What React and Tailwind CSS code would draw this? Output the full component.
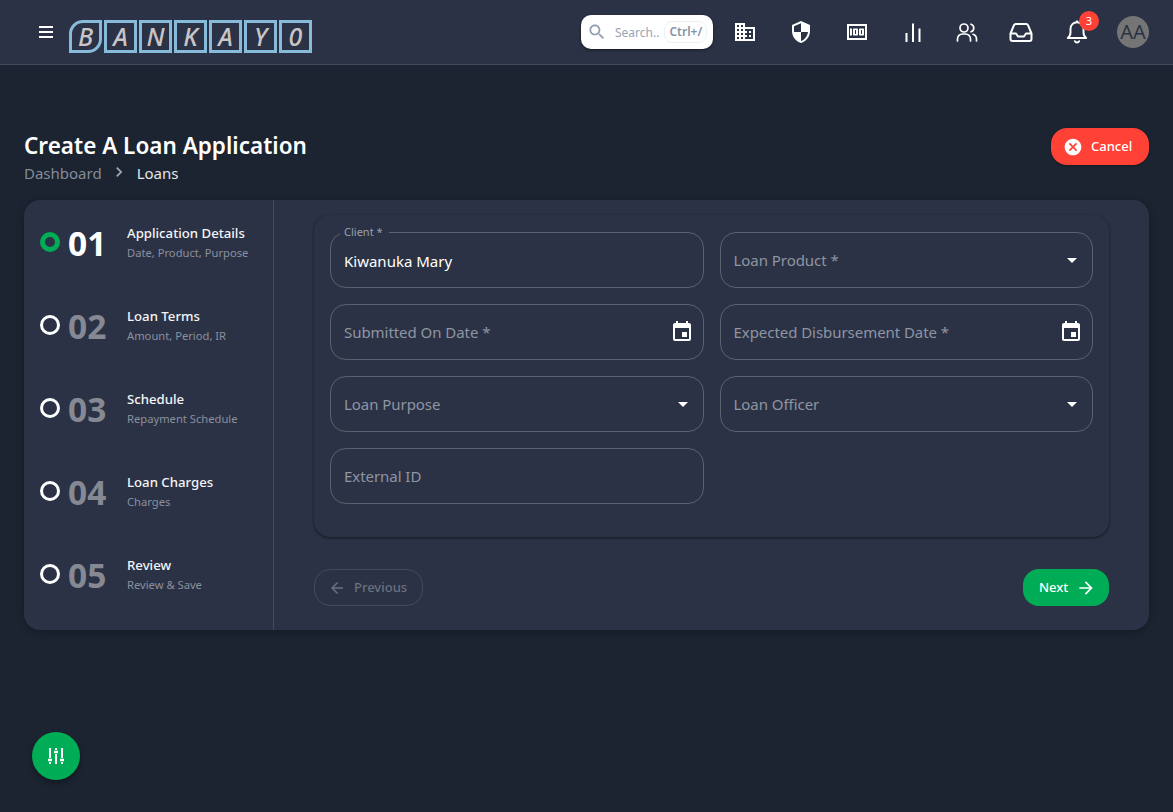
import React from "react";

const Ico = ({ d, size = 24, className = "", fill = "currentColor" }) => (
  <svg width={size} height={size} viewBox="0 0 24 24" fill={fill} className={className}>
    <path d={d} />
  </svg>
);

const CAL = "M17 12h-5v5h5v-5zM16 1v2H8V1H6v2H5c-1.11 0-1.99.9-1.99 2L3 19c0 1.1.89 2 2 2h14c1.1 0 2-.9 2-2V5c0-1.1-.9-2-2-2h-1V1h-2zm3 18H5V8h14v11z";

const Stroke = ({ children, size = 24, w = 2, cap = "round" }) => (
  <svg width={size} height={size} viewBox="0 0 24 24" fill="none" stroke="currentColor" strokeWidth={w} strokeLinecap={cap} strokeLinejoin="round">
    {children}
  </svg>
);

const Logo = () => (
  <div className="flex gap-[2px] ml-[16px] mt-[8px]">
    {"BANKAY0".split("").map((c, i) => (
      <div
        key={i}
        className={`w-[33px] h-[33px] border-[3px] border-[#86bcd9] flex items-center justify-center text-[#c9c5c6] italic text-[25px] font-medium font-['Noto_Sans',sans-serif] leading-none ${i === 0 ? "rounded-tl-[14px] rounded-br-[14px]" : ""}`}
      >
        {c}
      </div>
    ))}
  </div>
);

const HeaderIcon = ({ children }) => (
  <div className="w-[56px] flex items-center justify-center text-white">{children}</div>
);

const Step = ({ n, title, sub, active }) => (
  <div className="h-[83px] flex items-start pt-[23px] pl-[16px]">
    <div
      className={`w-[20px] h-[20px] rounded-full mt-[9px] shrink-0 ${active ? "border-[5px] border-[#00ad56]" : "border-[3px] border-white"}`}
    />
    <div className={`w-[59px] ml-[8px] mt-[1px] text-[33.5px] leading-[38px] font-bold font-['Open_Sans',sans-serif] ${active ? "text-white" : "text-[#868993]"}`}>
      {n}
    </div>
    <div>
      <div className="text-[13.2px] leading-[20px] font-medium text-[#f4f5f7]">{title}</div>
      <div className="text-[11.2px] leading-[20px] text-[#8a909e]">{sub}</div>
    </div>
  </div>
);

const Field = ({ label, value, icon, select }) => (
  <div className="relative h-[56px]">
    <fieldset className={`absolute inset-x-0 bottom-0 ${value ? "-top-[5px]" : "top-0"} rounded-[16px] border border-[#5b616f] px-[8px] pointer-events-none`}>
      {value && (
        <legend className="ml-[1px] h-[11px] px-[5px] text-[11px] leading-[11px] text-transparent">{label}</legend>
      )}
    </fieldset>
    {value ? (
      <>
        <span className="absolute left-[14px] -top-[6px] text-[11px] leading-[11px] text-[#9ba1ad]">{label}</span>
        <span className="absolute left-[14px] top-[19px] text-[15px] leading-[20px] text-white">{value}</span>
      </>
    ) : (
      <span className="absolute left-[14px] top-[18px] text-[15px] leading-[20px] text-[#8f95a2] tracking-[-0.05px]">{label}</span>
    )}
    {icon && (
      <span className="absolute right-[10px] top-[16px] text-white">
        <Ico d={CAL} />
      </span>
    )}
    {select && (
      <span className="absolute right-[9px] top-[16px] text-white">
        <Ico d="M7 10l5 5 5-5z" />
      </span>
    )}
  </div>
);

export default function App() {
  return (
    <div className="relative min-h-[812px] bg-[#1c2431] font-['Noto_Sans',sans-serif] overflow-hidden">
      <header className="h-[65px] bg-[#2b3245] border-b border-[#434a5b] flex items-center pl-[39px] pr-[24px]">
        <div className="w-[14px] flex flex-col gap-[3px] -mt-[1px]">
          <span className="block h-[2px] bg-white" />
          <span className="block h-[2px] bg-white" />
          <span className="block h-[2px] bg-white" />
        </div>
        <Logo />
        <div className="ml-auto flex items-center">
          <div className="w-[132px] h-[34px] rounded-[10px] bg-white shadow-[0_1px_3px_rgba(0,0,0,0.5)] flex items-center pl-[6px] -mt-[1px]">
            <span className="text-[#8e9cae]"><Ico d="M15.5 14h-.79l-.28-.27C15.41 12.59 16 11.11 16 9.5 16 5.91 13.09 3 9.5 3S3 5.91 3 9.5 5.91 16 9.5 16c1.61 0 3.09-.59 4.23-1.57l.27.28v.79l5 4.99L20.49 19l-4.99-5zm-6 0C7.01 14 5 11.99 5 9.5S7.01 5 9.5 5 14 7.01 14 9.5 11.99 14 9.5 14z" size={20} /></span>
            <span className="ml-[8px] text-[12px] leading-[20px] mt-[2px] text-[#97a3b4]">Search..</span>
            <span className="ml-[5px] h-[22px] px-[4px] rounded-[8px] border border-[#eef1f4] flex items-center text-[12px] font-semibold text-[#8494a8]">Ctrl+/</span>
          </div>
          <div className="flex items-center ml-[4px]">
            <HeaderIcon><Ico d="M12 7V3H2v18h20V7H12zM6 19H4v-2h2v2zm0-4H4v-2h2v2zm0-4H4V9h2v2zm0-4H4V5h2v2zm4 12H8v-2h2v2zm0-4H8v-2h2v2zm0-4H8V9h2v2zm0-4H8V5h2v2zm10 12h-8v-2h2v-2h-2v-2h2v-2h-2V9h8v10zm-2-8h-2v2h2v-2zm0 4h-2v2h2v-2z" /></HeaderIcon>
            <HeaderIcon><Ico d="M12 1 3 5v6c0 5.55 3.84 10.74 9 12 5.16-1.26 9-6.45 9-12V5l-9-4zm0 10.99h7c-.53 4.12-3.28 7.79-7 8.94V12H5V6.3l7-3.11v8.8z" /></HeaderIcon>
            <HeaderIcon><Ico d="M5 8.5h2v7H5zM12 8.5H9c-.55 0-1 .45-1 1v5c0 .55.45 1 1 1h3c.55 0 1-.45 1-1v-5c0-.55-.45-1-1-1zm-1 5.5h-1v-4h1v4zM18 8.5h-3c-.55 0-1 .45-1 1v5c0 .55.45 1 1 1h3c.55 0 1-.45 1-1v-5c0-.55-.45-1-1-1zm-1 5.5h-1v-4h1v4zM2 4v16h20V4H2zm2 14V6h16v12H4z" /></HeaderIcon>
            <HeaderIcon>
              <Stroke w={2} cap="butt"><path d="M5.5 13v9M12 3.5V22M18.5 8.5V22" /></Stroke>
            </HeaderIcon>
            <div className="w-[52px] flex items-center justify-center text-white">
              <Stroke w={1.7}>
                <circle cx="9" cy="8" r="4" />
                <path d="M2.5 21v-2a5 5 0 0 1 5-5h3a5 5 0 0 1 5 5v2M16 4.2a4 4 0 0 1 0 7.6M21.5 21v-2a5 5 0 0 0-3.5-4.7" />
              </Stroke>
            </div>
            <HeaderIcon>
              <Stroke w={2}>
                <path d="M1.5 13.5 5 5.2A2 2 0 0 1 6.8 4h10.4a2 2 0 0 1 1.8 1.2l3.5 8.3V19a2 2 0 0 1-2 2h-17a2 2 0 0 1-2-2zM1.5 13.5H7l2 3h6l2-3h5.5" />
              </Stroke>
            </HeaderIcon>
            <div className="relative w-[56px] flex items-center justify-center text-white">
              <Stroke w={1.8} size={26}>
                <path d="M3.5 17.5c1.5-1 2.5-2.5 2.5-5V9a6 6 0 0 1 12 0v3.5c0 2.5 1 4 2.5 5zM12 3V2M10 20.5a2.2 2.2 0 0 0 4 0" />
              </Stroke>
              <span className="absolute left-[30px] -top-[8px] w-[20px] h-[20px] rounded-full bg-[#ff4136] text-white text-[11px] flex items-center justify-center">3</span>
            </div>
            <div className="ml-[12px] w-[32px] h-[32px] rounded-full bg-[#757575] text-[#2b3245] text-[20px] flex items-center justify-center">AA</div>
          </div>
        </div>
      </header>

      <main className="px-[24px] pt-[63px]">
        <div className="flex items-start justify-between h-[72px]">
          <div>
            <h1 className="text-[22.5px] leading-[36px] font-semibold text-white">Create A Loan Application</h1>
            <div className="flex items-center text-[15px] leading-[20px] -mt-[1px]">
              <span className="text-[#858b98]">Dashboard</span>
              <span className="mx-[7px] -mt-[2px] text-[#a5a9b2]"><Ico d="M10 6 8.59 7.41 13.17 12l-4.58 4.59L10 18l6-6z" size={20} /></span>
              <span className="text-[#e4e6ea] ml-[1px]">Loans</span>
            </div>
          </div>
          <button className="w-[98px] h-[37px] rounded-[16px] bg-[#ff4136] text-white text-[13px] font-medium flex items-center pl-[12px] shadow-[0_1px_3px_rgba(0,0,0,0.3)]">
            <Ico size={20} d="M12 2C6.47 2 2 6.47 2 12s4.47 10 10 10 10-4.47 10-10S17.53 2 12 2zm5 13.59L15.59 17 12 13.41 8.41 17 7 15.59 10.59 12 7 8.41 8.41 7 12 10.59 15.59 7 17 8.41 13.41 12 17 15.59z" />
            <span className="ml-[8px]">Cancel</span>
          </button>
        </div>

        <div className="h-[430px] rounded-[16px] bg-[#2b3245] flex shadow-[0_2px_8px_rgba(0,0,0,0.25)]">
          <aside className="w-[250px] border-r border-[#434a5b] shrink-0">
            <Step n="01" title="Application Details" sub="Date, Product, Purpose" active />
            <Step n="02" title="Loan Terms" sub="Amount, Period, IR" />
            <Step n="03" title="Schedule" sub="Repayment Schedule" />
            <Step n="04" title="Loan Charges" sub="Charges" />
            <Step n="05" title="Review" sub="Review & Save" />
          </aside>
          <section className="flex-1 pl-[40px] pr-[40px] pt-[15px]">
            <div className="h-[322px] rounded-[16px] bg-[#2b3245] px-[16px] pt-[17px] shadow-[0_1px_3px_rgba(0,0,0,0.55)]">
              <div className="grid grid-cols-2 gap-x-[16px] gap-y-[16px]">
                <Field label="Client *" value="Kiwanuka Mary" />
                <Field label="Loan Product *" select />
                <Field label="Submitted On Date *" icon />
                <Field label="Expected Disbursement Date *" icon />
                <Field label="Loan Purpose" select />
                <Field label="Loan Officer" select />
                <Field label="External ID" />
              </div>
            </div>
            <div className="flex justify-between mt-[32px]">
              <button className="w-[109px] h-[37px] rounded-[16px] border border-[#434a5b] text-[#6a7080] text-[13px] font-medium flex items-center pl-[13px]">
                <Ico size={18} d="M20 11H7.83l5.59-5.59L12 4l-8 8 8 8 1.41-1.41L7.83 13H20v-2z" />
                <span className="ml-[8px]">Previous</span>
              </button>
              <button className="w-[86px] h-[37px] rounded-[16px] bg-[#00ad56] text-white text-[13px] font-medium flex items-center pl-[16px]">
                <span>Next</span>
                <span className="ml-[8px]"><Ico size={20} d="m12 4-1.41 1.41L16.17 11H4v2h12.17l-5.58 5.59L12 20l8-8z" /></span>
              </button>
            </div>
          </section>
        </div>
      </main>

      <button className="absolute left-[32px] top-[732px] w-[48px] h-[48px] rounded-full bg-[#00ad56] text-white flex items-center justify-center shadow-[0_3px_6px_rgba(0,0,0,0.35)]">
        <svg width="16" height="16" viewBox="0 0 16 16" fill="none" stroke="currentColor" strokeWidth="2">
          <path d="M2 0v10M2 14v2M8 0v2M8 6v10M14 0v10M14 14v2" />
          <path d="M0 12h4M6 4h4M12 12h4" strokeWidth="2.4" />
        </svg>
      </button>
    </div>
  );
}
